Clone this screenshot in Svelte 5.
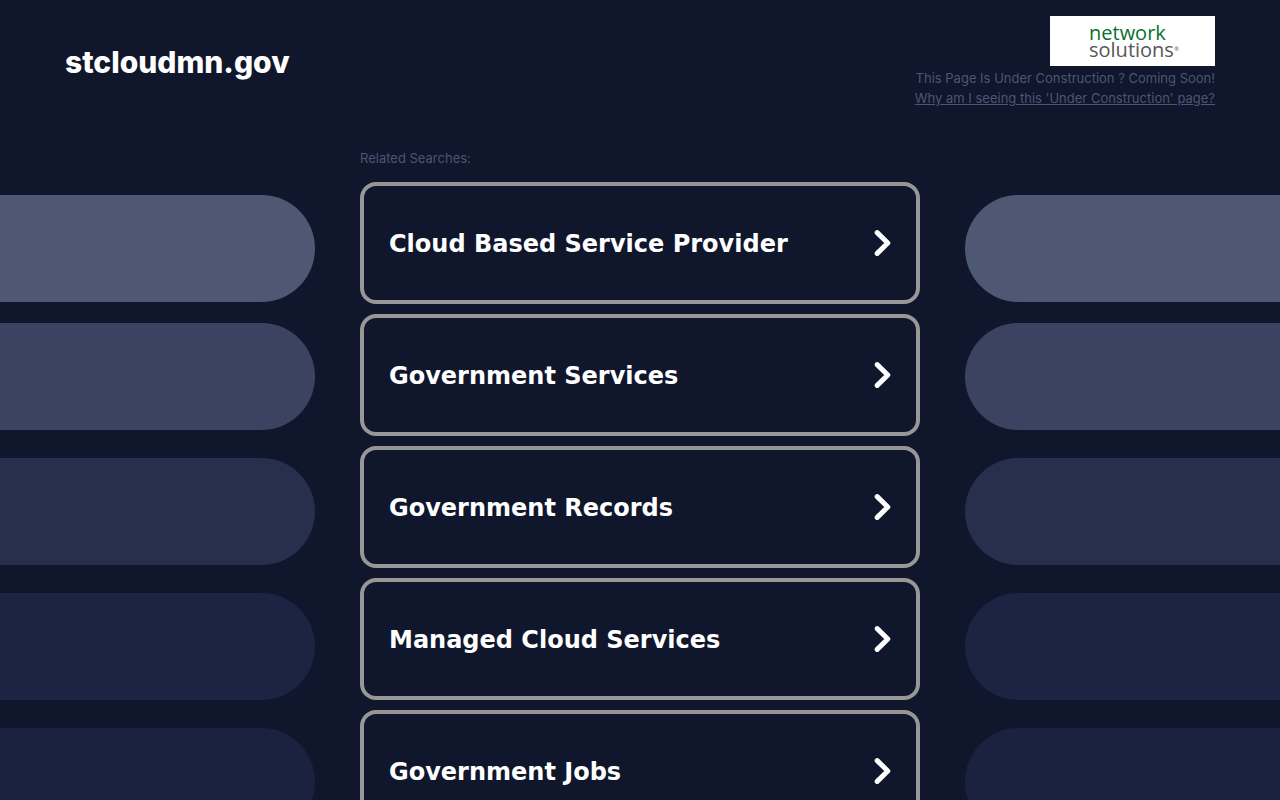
<script lang="ts">
  const domain = 'stcloudmn.gov';

  const searches = [
    'Cloud Based Service Provider',
    'Government Services',
    'Government Records',
    'Managed Cloud Services',
    'Government Jobs',
  ];

  const shades = ['slate', 'dusk', 'navy', 'deep', 'night'];
</script>

{#snippet pills(side: string)}
  <div class="pills {side}" aria-hidden="true">
    {#each shades as shade}
      <span class="pill {shade}"></span>
    {/each}
  </div>
{/snippet}

<div class="page">
  <header>
    <h1>{domain}</h1>
    <div class="notice">
      <a class="logo" href="#home">
        <span class="network">network</span>
        <span class="solutions">solutions<sup>®</sup></span>
      </a>
      <p>This Page Is Under Construction ? Coming Soon!</p>
      <a class="why" href="#why">Why am I seeing this 'Under Construction' page?</a>
    </div>
  </header>

  <main>
    {@render pills('left')}
    <section>
      <h2>Related Searches:</h2>
      <ul>
        {#each searches as search}
          <li>
            <a class="card" href="#search">
              <span>{search}</span>
              <svg viewBox="0 0 18 28" width="18" height="28" aria-hidden="true">
                <path d="M3.2 3.6 L13.8 14 L3.2 24.4" />
              </svg>
            </a>
          </li>
        {/each}
      </ul>
    </section>
    {@render pills('right')}
  </main>
</div>

<style>
  :global(body) {
    background: #10162b;
  }

  .page {
    color: #4e5573;
    font-family: Inter, 'Open Sans', sans-serif;
    font-size: 13px;
    line-height: 20px;
    overflow: hidden;
  }

  header {
    display: flex;
    justify-content: space-between;
    align-items: flex-start;
    padding: 16px 65px 0;
  }

  h1 {
    margin: 26px 0 0;
    color: #fff;
    font-size: 30px;
    line-height: 40px;
    font-weight: 800;
  }

  .notice {
    display: flex;
    flex-direction: column;
    align-items: flex-end;
  }

  .notice p {
    margin: 2px 0 0;
  }

  .why {
    color: inherit;
  }

  .logo {
    display: flex;
    flex-direction: column;
    box-sizing: border-box;
    width: 165px;
    height: 50px;
    padding: 8px 0 0 39px;
    background: #fff;
    font-family: 'Open Sans', sans-serif;
    font-size: 20px;
    line-height: 17px;
    text-decoration: none;
  }

  .network {
    color: #087030;
  }

  .solutions {
    color: #55565a;
  }

  sup {
    font-size: 6px;
    line-height: 0;
    vertical-align: 6px;
  }

  main {
    display: grid;
    grid-template-columns: 1fr 560px 1fr;
    column-gap: 45px;
    padding-top: 40px;
  }

  h2 {
    margin: 0 0 14px;
    font-size: 13px;
    line-height: 20px;
    font-weight: 400;
  }

  ul {
    display: flex;
    flex-direction: column;
    gap: 10px;
    margin: 0;
    padding: 0;
    list-style: none;
  }

  .card {
    display: flex;
    justify-content: space-between;
    align-items: center;
    box-sizing: border-box;
    min-height: 122px;
    padding: 0 24px 0 25px;
    border: 4px solid #979797;
    border-radius: 16px;
    color: #fff;
    font-family: Verdana, 'DejaVu Sans', sans-serif;
    font-size: 24px;
    line-height: 32px;
    font-weight: 700;
    text-decoration: none;
  }

  .card span {
    padding-top: 2px;
  }

  .card svg {
    flex: none;
    fill: none;
    stroke: #fff;
    stroke-width: 5;
    stroke-linecap: round;
    stroke-linejoin: round;
  }

  .pills {
    display: flex;
    flex-direction: column;
    gap: 28px;
    padding-top: 47px;
  }

  .pill {
    height: 107px;
  }

  .left .pill {
    border-radius: 0 54px 54px 0;
  }

  .right .pill {
    border-radius: 54px 0 0 54px;
  }

  .slate {
    margin-bottom: -7px;
    background: #4f5872;
  }

  .dusk {
    background: #3c4362;
  }

  .navy {
    background: #272f4e;
  }

  .deep {
    background: #1c2444;
  }

  .night {
    background: #1a2240;
  }
</style>
